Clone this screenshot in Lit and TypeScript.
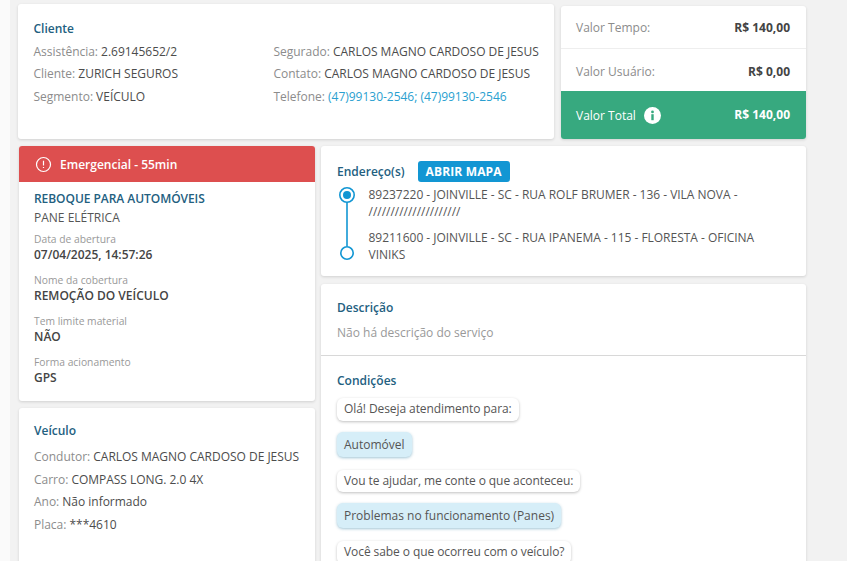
import { LitElement, html, css } from "lit";
import { customElement } from "lit/decorators.js";

@customElement("app-root")
export class AppRoot extends LitElement {
  static styles = css`
    :host { display: block; height: 561px; overflow: hidden; background: #fafafa; font-family: "Open Sans", "Noto Sans", sans-serif; font-size: 12px; color: #555; }
    .page { margin-left: 10px; width: 837px; height: 561px; background: #f2f2f2; box-sizing: border-box; padding: 4px 41px 0 8px; overflow: hidden; }
    .top { display: grid; grid-template-columns: 536px 245px; column-gap: 7px; height: 135px; }
    .card { background: #fff; border-radius: 3px; box-shadow: 0 1px 3px rgba(0,0,0,.14); }
    .client { padding: 17px 15px 0 15.5px; }
    h3 { margin: 0; font-size: 12px; line-height: 16px; font-weight: 600; color: #23607f; }
    .cols { display: grid; grid-template-columns: 240px 1fr; margin-top: 3.5px; }
    .row { line-height: 22.5px; white-space: nowrap; color: #4c4c4c; letter-spacing: -.02px; }
    .k { color: #8c8c8c; }
    .link { color: #2a9fd0; }
    .values { margin-top: 2px; display: grid; grid-template-rows: 42px 43px 48px; overflow: hidden; }
    .v { display: flex; align-items: center; justify-content: space-between; padding: 0 16px 0 15px; color: #8c8c8c; }
    .v b { color: #444; font-weight: 700; }
    .v + .v { border-top: 1px solid #eee; padding-top: 2px; }
    .v.total { background: #37a97f; color: #fff; border: 0; padding-top: 1px; }
    .v.total b { color: #fff; margin-top: -3px; }
    .total span { display: flex; align-items: center; gap: 8px; }
    .main { display: grid; grid-template-columns: 296px 485px; column-gap: 6px; margin-top: 7px; padding-left: 1px; }
    .left, .right { display: flex; flex-direction: column; }
    .left { gap: 7px; }
    .right { gap: 8px; }
    .alert { height: 36px; background: #dd4f4f; color: #fff; border-radius: 3px 3px 0 0; display: flex; align-items: center; gap: 8px; padding-left: 16px; font-weight: 600; }
    .service { height: 255px; }
    .body { padding: 9px 15px; }
    .body h3 { line-height: 16px; letter-spacing: -.05px; }
    .sub { line-height: 22px; white-space: nowrap; margin-bottom: 3px; }
    .lab { font-size: 10.3px; line-height: 14px; color: #999; }
    .val { font-weight: 600; line-height: 17px; color: #444; }
    .field + .field { margin-top: 10px; }
    .vehicle { padding: 15px 15px 0; height: 170px; box-sizing: border-box; }
    .vehicle h3 { margin-bottom: 7px; }
    .addr { height: 130px; box-sizing: border-box; padding: 15px 16px 0; }
    .addr-head { display: flex; align-items: center; gap: 13px; }
    .btn { background: #1296d3; color: #fff; font-weight: 700; border-radius: 3px; padding: 0 8px; line-height: 21px; letter-spacing: .15px; }
    .route { display: grid; grid-template-columns: 31.5px 1fr; margin-top: 1px; }
    .stops { line-height: 16.5px; color: #555; padding-top: 3px; }
    .stops div { margin-top: 1px; margin-bottom: 10px; width: 400px; letter-spacing: -.02px; }
    .desc { padding: 16px 16px 14px; border-bottom: 1px solid #d8d8d8; }
    .desc p { margin: 9px 0 0; color: #999; line-height: 16px; }
    .cond { padding: 17px 16px; display: flex; flex-direction: column; align-items: flex-start; }
    .q, .a { border-radius: 6px; padding: 0 7px; box-shadow: 0 1px 3px rgba(0,0,0,.25); white-space: nowrap; margin-bottom: 12px; }
    .q { background: #fff; line-height: 22.5px; letter-spacing: -.08px; }
    .a { background: #d6eef8; line-height: 25px; box-shadow: 0 1px 3px rgba(20,110,150,.4); margin-top: -1px; margin-bottom: 13px; }
    .cond h3 { margin-bottom: 9px; }
  `;

  render() {
    return html`<div class="page">
      <div class="top">
        <section class="card client">
          <h3>Cliente</h3>
          <div class="cols">
            <div>
              <div class="row"><span class="k">Assistência:</span> 2.69145652/2</div>
              <div class="row"><span class="k">Cliente:</span> ZURICH SEGUROS</div>
              <div class="row"><span class="k">Segmento:</span> VEÍCULO</div>
            </div>
            <div>
              <div class="row"><span class="k">Segurado:</span> CARLOS MAGNO CARDOSO DE JESUS</div>
              <div class="row"><span class="k">Contato:</span> CARLOS MAGNO CARDOSO DE JESUS</div>
              <div class="row"><span class="k">Telefone:</span> <span class="link">(47)99130-2546; (47)99130-2546</span></div>
            </div>
          </div>
        </section>
        <section class="card values">
          <div class="v"><span>Valor Tempo:</span><b>R$ 140,00</b></div>
          <div class="v"><span>Valor Usuário:</span><b>R$ 0,00</b></div>
          <div class="v total"><span>Valor Total
            <svg width="17" height="17" viewBox="0 0 17 17"><circle cx="8.5" cy="8.5" r="8.5" fill="#fff"/><rect x="7.3" y="7.2" width="2.4" height="6" fill="#37a97f"/><circle cx="8.5" cy="4.9" r="1.4" fill="#37a97f"/></svg></span><b>R$ 140,00</b></div>
        </section>
      </div>
      <div class="main">
        <div class="left">
          <section class="card service">
            <div class="alert">
              <svg width="17" height="17" viewBox="0 0 17 17" fill="none" stroke="#fff" stroke-width="1.2"><circle cx="8.5" cy="8.5" r="7"/><path d="M8.5 4.8v4.6M8.5 11v1.1"/></svg>
              Emergencial - 55min
            </div>
            <div class="body">
              <h3>REBOQUE PARA AUTOMÓVEIS</h3>
              <div class="sub">PANE ELÉTRICA</div>
              <div class="field"><div class="lab">Data de abertura</div><div class="val">07/04/2025, 14:57:26</div></div>
              <div class="field"><div class="lab">Nome da cobertura</div><div class="val">REMOÇÃO DO VEÍCULO</div></div>
              <div class="field"><div class="lab">Tem limite material</div><div class="val">NÃO</div></div>
              <div class="field"><div class="lab">Forma acionamento</div><div class="val">GPS</div></div>
            </div>
          </section>
          <section class="card vehicle">
            <h3>Veículo</h3>
            <div class="row"><span class="k">Condutor:</span> CARLOS MAGNO CARDOSO DE JESUS</div>
            <div class="row"><span class="k">Carro:</span> COMPASS LONG. 2.0 4X</div>
            <div class="row"><span class="k">Ano:</span> Não informado</div>
            <div class="row"><span class="k">Placa:</span> ***4610</div>
          </section>
        </div>
        <div class="right">
          <section class="card addr">
            <div class="addr-head"><h3>Endereço(s)</h3><span class="btn">ABRIR MAPA</span></div>
            <div class="route">
              <svg width="22" height="78" viewBox="0 0 22 78" fill="none" stroke="#1296d3"><circle cx="10" cy="12" r="7.2" stroke-width="1.6"/><circle cx="10" cy="12" r="4" fill="#1296d3" stroke="none"/><path d="M10 19.2v44" stroke-width="1.6"/><circle cx="10" cy="70" r="6.2" stroke-width="1.6"/></svg>
              <div class="stops">
                <div>89237220 - JOINVILLE - SC - RUA ROLF BRUMER - 136 - VILA NOVA - /////////////////////</div>
                <div>89211600 - JOINVILLE - SC - RUA IPANEMA - 115 - FLORESTA - OFICINA VINIKS</div>
              </div>
            </div>
          </section>
          <section class="card">
            <div class="desc"><h3>Descrição</h3><p>Não há descrição do serviço</p></div>
            <div class="cond">
              <h3>Condições</h3>
              <div class="q">Olá! Deseja atendimento para:</div>
              <div class="a">Automóvel</div>
              <div class="q">Vou te ajudar, me conte o que aconteceu:</div>
              <div class="a">Problemas no funcionamento (Panes)</div>
              <div class="q">Você sabe o que ocorreu com o veículo?</div>
            </div>
          </section>
        </div>
      </div>
    </div>`;
  }
}
